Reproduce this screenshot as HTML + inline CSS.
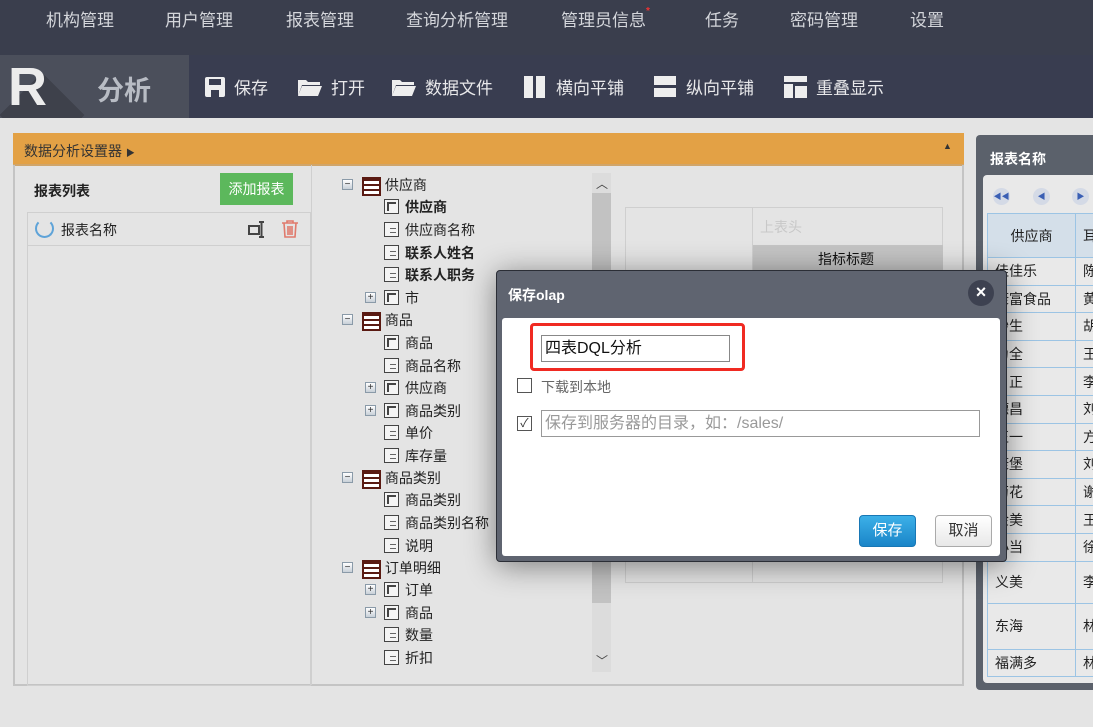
<!DOCTYPE html>
<html><head><meta charset="utf-8"><style>
*{margin:0;padding:0;box-sizing:border-box}
body{width:1093px;height:727px;overflow:hidden;background:#e4e4e4;font-family:"Liberation Sans","Noto Sans CJK SC",sans-serif;position:relative;font-size:14px;color:#222}
.a{position:absolute}
.nav{left:0;top:0;width:1093px;height:55px;background:#3a3e4d}
.nav span{position:absolute;top:6px;color:#d4d6db;font-size:17px}
.tb{left:0;top:55px;width:1093px;height:63px;background:#393d50}
.tb .it{position:absolute;top:19px;color:#e8e8ea;font-size:17px;white-space:nowrap}
.tree div{position:absolute;font-size:14px;white-space:nowrap;color:#222}
.ic0{display:inline-block;width:19px;height:19px;border:2px solid #5a1a12;background:repeating-linear-gradient(#5a1a12 0 2px,#fff 2px 5px);vertical-align:middle}
.ic1{position:absolute;width:15px;height:15px;border:1.5px solid #444;background:linear-gradient(#444,#444) 2px 2px/2px 9px no-repeat,linear-gradient(#444,#444) 2px 2px/9px 2px no-repeat,#f4f4f4}
.ic2{position:absolute;width:15px;height:15px;border:1.5px solid #444;background:repeating-linear-gradient(#f4f4f4 0 2px,#666 2px 3px,#f4f4f4 3px 4px) 5px 3px/6px 8px no-repeat,#f4f4f4}
.tg{position:absolute;width:11px;height:11px;border:1px solid #8a9aa8;background:linear-gradient(#fff,#c8d0d8);font-size:10px;line-height:9px;text-align:center;color:#333}
.rt td{border:1px solid #9cc4e4;height:27.6px;padding-left:7px;font-size:14px;color:#222;white-space:nowrap}
</style></head><body>
<div class="a nav">
<span style="left:46px">机构管理</span><span style="left:165px">用户管理</span><span style="left:286px">报表管理</span><span style="left:406px">查询分析管理</span><span style="left:561px">管理员信息<b style="color:#e33;font-size:10px;vertical-align:top">*</b></span><span style="left:705px">任务</span><span style="left:790px">密码管理</span><span style="left:910px">设置</span>
</div>
<div class="a tb">
<div class="a" style="left:0;top:0;width:189px;height:63px;background:#4b4f5b;overflow:hidden">
<div class="a" style="left:12px;top:30px;width:60px;height:60px;background:#3e414b;transform:rotate(45deg)"></div>
<div class="a" style="left:0;top:0;width:60px;height:63px;"></div>
</div>
<div class="a" style="left:8px;top:4px;font:900 54px 'Liberation Sans',sans-serif;color:#ececec;line-height:56px">R</div>
<div class="a" style="left:97px;top:14px;font-size:27px;font-weight:bold;color:#b8bcc4">分析</div>
<div class="it" style="left:204px"><svg width="22" height="22" style="vertical-align:-4px;margin-right:8px"><rect x="1" y="1" width="20" height="20" rx="2" fill="#eee"/><rect x="5" y="3" width="12" height="6" fill="#393d50"/><rect x="7" y="14" width="8" height="7" fill="#393d50"/></svg>保存</div>
<div class="it" style="left:297px"><svg width="26" height="20" style="vertical-align:-3px;margin-right:8px"><path d="M1 3h8l2 2h12v3H5L1 19z" fill="#eee"/><path d="M5 9h20l-4 10H1z" fill="#eee"/></svg>打开</div>
<div class="it" style="left:391px"><svg width="26" height="20" style="vertical-align:-3px;margin-right:8px"><path d="M1 3h8l2 2h12v3H5L1 19z" fill="#eee"/><path d="M5 9h20l-4 10H1z" fill="#eee"/></svg>数据文件</div>
<div class="it" style="left:524px"><svg width="22" height="22" style="vertical-align:-4px;margin-right:10px"><rect x="0" y="0" width="9" height="22" fill="#eee"/><rect x="12" y="0" width="9" height="22" fill="#eee"/></svg>横向平铺</div>
<div class="it" style="left:654px"><svg width="22" height="22" style="vertical-align:-4px;margin-right:10px"><rect x="0" y="0" width="22" height="9" fill="#eee"/><rect x="0" y="12" width="22" height="9" fill="#eee"/></svg>纵向平铺</div>
<div class="it" style="left:784px"><svg width="23" height="22" style="vertical-align:-4px;margin-right:9px"><rect x="0" y="0" width="23" height="6" fill="#eee"/><rect x="0" y="8" width="9" height="14" fill="#eee"/><rect x="11" y="10" width="12" height="12" fill="#eee"/></svg>重叠显示</div>
</div>
<!-- main panel -->
<div class="a" style="left:13px;top:133px;width:951px;height:33px;background:#e3a145;border-bottom:2px solid #d0a56a"></div>
<div class="a" style="left:24px;top:141px;font-size:14px;color:#333">数据分析设置器 <span style="font-size:9px">▶</span></div>
<div class="a" style="left:943px;top:141px;font-size:9px;color:#333">▲</div>
<div class="a" style="left:13px;top:165px;width:951px;height:521px;border:2px solid #c4c4c4;border-top:none"></div>
<div class="a" style="left:311px;top:165px;width:1px;height:520px;background:#cfcfcf"></div>
<div class="a" style="left:34px;top:181px;font-size:14px;font-weight:bold;color:#222">报表列表</div>
<div class="a" style="left:220px;top:173px;width:73px;height:32px;background:#5cb85c;color:#fff;font-size:14px;line-height:32px;text-align:center">添加报表</div>
<div class="a" style="left:27px;top:212px;width:284px;height:34px;border:1px solid #cfcfcf"></div>
<div class="a" style="left:27px;top:246px;width:284px;height:440px;border:1px solid #cfcfcf;border-top:none"></div>
<div class="a" style="left:35px;top:219px;width:19px;height:19px;border:2.5px solid #5ea3d8;border-radius:50%;border-top-color:transparent"></div>
<div class="a" style="left:61px;top:220px;font-size:14px">报表名称</div>
<svg class="a" style="left:247px;top:220px" width="20" height="19"><path d="M2 6h10v8H2z" stroke="#444" stroke-width="2" fill="none"/><path d="M12 2h5M12 17h5M14.5 2v15" stroke="#444" stroke-width="2"/></svg>
<svg class="a" style="left:281px;top:220px" width="18" height="18"><path d="M1 3h16M6 3V1h6v2M3 3l1 14h10l1-14M7 6v9M9 6v9M11 6v9" stroke="#e07a6c" stroke-width="1.6" fill="none"/></svg>
<!-- scrollbar -->
<div class="a" style="left:592px;top:173px;width:19px;height:499px;background:#dcdcdc"></div>
<div class="a" style="left:592px;top:193px;width:19px;height:410px;background:#c2c2c2"></div>
<div class="a" style="left:596px;top:175px;font-size:12px;color:#444">︿</div>
<div class="a" style="left:596px;top:652px;font-size:12px;color:#444">﹀</div>
<!-- tree -->
<div class="tree">
<div style="left:362px;top:175px"><span class="ic0"></span> 供应商</div>
<div style="left:362px;top:310px"><span class="ic0"></span> 商品</div>
<div style="left:362px;top:468px"><span class="ic0"></span> 商品类别</div>
<div style="left:362px;top:558px"><span class="ic0"></span> 订单明细</div>
<div style="left:405px;top:197px;font-weight:bold">供应商</div>
<div style="left:405px;top:220px">供应商名称</div>
<div style="left:405px;top:243px;font-weight:bold">联系人姓名</div>
<div style="left:405px;top:265px;font-weight:bold">联系人职务</div>
<div style="left:405px;top:288px">市</div>
<div style="left:405px;top:333px">商品</div>
<div style="left:405px;top:356px">商品名称</div>
<div style="left:405px;top:378px">供应商</div>
<div style="left:405px;top:401px">商品类别</div>
<div style="left:405px;top:423px">单价</div>
<div style="left:405px;top:446px">库存量</div>
<div style="left:405px;top:490px">商品类别</div>
<div style="left:405px;top:513px">商品类别名称</div>
<div style="left:405px;top:536px">说明</div>
<div style="left:405px;top:580px">订单</div>
<div style="left:405px;top:603px">商品</div>
<div style="left:405px;top:625px">数量</div>
<div style="left:405px;top:648px">折扣</div>
</div>
<div class="ic1" style="left:384px;top:199px"></div><div class="ic2" style="left:384px;top:222px"></div><div class="ic2" style="left:384px;top:245px"></div><div class="ic2" style="left:384px;top:267px"></div><div class="ic1" style="left:384px;top:290px"></div>
<div class="ic1" style="left:384px;top:335px"></div><div class="ic2" style="left:384px;top:358px"></div><div class="ic1" style="left:384px;top:380px"></div><div class="ic1" style="left:384px;top:403px"></div><div class="ic2" style="left:384px;top:425px"></div><div class="ic2" style="left:384px;top:448px"></div>
<div class="ic1" style="left:384px;top:492px"></div><div class="ic2" style="left:384px;top:515px"></div><div class="ic2" style="left:384px;top:538px"></div>
<div class="ic1" style="left:384px;top:582px"></div><div class="ic1" style="left:384px;top:605px"></div><div class="ic2" style="left:384px;top:627px"></div><div class="ic2" style="left:384px;top:650px"></div>
<div class="tg" style="left:342px;top:179px">−</div><div class="tg" style="left:342px;top:314px">−</div><div class="tg" style="left:342px;top:472px">−</div><div class="tg" style="left:342px;top:562px">−</div>
<div class="tg" style="left:365px;top:292px">+</div><div class="tg" style="left:365px;top:382px">+</div><div class="tg" style="left:365px;top:405px">+</div><div class="tg" style="left:365px;top:584px">+</div><div class="tg" style="left:365px;top:607px">+</div>
<!-- pivot -->
<div class="a" style="left:625px;top:207px;width:318px;height:376px;border:1px solid #cfcfcf"></div>
<div class="a" style="left:752px;top:207px;width:1px;height:376px;background:#cfcfcf"></div>
<div class="a" style="left:753px;top:245px;width:190px;height:25px;background:#c4c4c4"></div>
<div class="a" style="left:760px;top:217px;color:#c8c8c8">上表头</div>
<div class="a" style="left:818px;top:249px;color:#111">指标标题</div>
<!-- right panel -->
<div class="a" style="left:976px;top:135px;width:130px;height:555px;background:#5b616b;border-radius:4px"></div>
<div class="a" style="left:990px;top:149px;color:#fff;font-weight:bold;font-size:14px">报表名称</div>
<div class="a" style="left:983px;top:175px;width:120px;height:508px;background:#e9e9e9;border-radius:4px"></div>
<div class="a" style="left:993px;top:188px;width:17px;height:17px;border-radius:50%;background:#d4dae6;color:#3a5fb4;font-size:8px;text-align:center;line-height:17px">◀◀</div>
<div class="a" style="left:1033px;top:188px;width:17px;height:17px;border-radius:50%;background:#d4dae6;color:#3a5fb4;font-size:8px;text-align:center;line-height:17px">◀</div>
<div class="a" style="left:1072px;top:188px;width:17px;height:17px;border-radius:50%;background:#d4dae6;color:#3a5fb4;font-size:8px;text-align:center;line-height:17px">▶</div>
<table class="a rt" style="left:987px;top:213px;border-collapse:collapse;width:140px">
<tr><td style="height:44px;background:#d4dfe9;width:88px;text-align:center;padding:0">供应商</td><td style="background:#d4dfe9">耳</td></tr>
<tr><td>佳佳乐</td><td>陈</td></tr><tr><td>康富食品</td><td>黄</td></tr><tr><td>妙生</td><td>胡</td></tr><tr><td>为全</td><td>王</td></tr><tr><td>日正</td><td>李</td></tr><tr><td>德昌</td><td>刘</td></tr><tr><td>正一</td><td>方</td></tr><tr><td>康堡</td><td>刘</td></tr><tr><td>菊花</td><td>谢</td></tr><tr><td>金美</td><td>王</td></tr><tr><td>小当</td><td>徐</td></tr>
<tr><td style="height:42px">义美</td><td>李</td></tr><tr><td style="height:46px">东海</td><td>林</td></tr><tr><td>福满多</td><td>林</td></tr>
</table>
<!-- dialog -->
<div class="a" style="left:496px;top:270px;width:511px;height:292px;background:#5f6470;border:1px solid #2b2e36;border-radius:4px;box-shadow:0 4px 30px rgba(0,0,0,.45)"></div>
<div class="a" style="left:508px;top:285px;color:#fff;font-weight:bold;font-size:14px">保存olap</div>
<div class="a" style="left:968px;top:280px;width:26px;height:26px;border-radius:50%;background:#3d4150;color:#fff;text-align:center;line-height:25px;font-size:18px;font-weight:bold">×</div>
<div class="a" style="left:502px;top:318px;width:498px;height:238px;background:#fff;border-radius:3px"></div>
<div class="a" style="left:530px;top:323px;width:215px;height:48px;border:3px solid #f02a22;border-radius:4px"></div>
<div class="a" style="left:541px;top:335px;width:189px;height:27px;border:1px solid #888;padding-left:3px;font-size:16px;line-height:25px;color:#111">四表DQL分析</div>
<div class="a" style="left:517px;top:378px;width:15px;height:15px;border:1px solid #555"></div>
<div class="a" style="left:541px;top:377px;color:#666;font-size:14px">下载到本地</div>
<div class="a" style="left:517px;top:416px;width:15px;height:15px;border:1px solid #555;font-size:12px;line-height:13px;text-align:center;color:#333">✓</div>
<div class="a" style="left:541px;top:410px;width:439px;height:27px;border:1px solid #999;padding-left:3px;font-size:16px;line-height:25px;color:#999">保存到服务器的目录，如：/sales/</div>
<div class="a" style="left:859px;top:515px;width:57px;height:32px;background:linear-gradient(#3cb0e8,#1a85c8);border:1px solid #1877b5;border-radius:4px;color:#fff;text-align:center;line-height:30px;font-size:15px">保存</div>
<div class="a" style="left:935px;top:515px;width:57px;height:32px;background:linear-gradient(#fff,#e8e8e8);border:1px solid #aaa;border-radius:4px;color:#333;text-align:center;line-height:30px;font-size:15px">取消</div>
</body></html>
